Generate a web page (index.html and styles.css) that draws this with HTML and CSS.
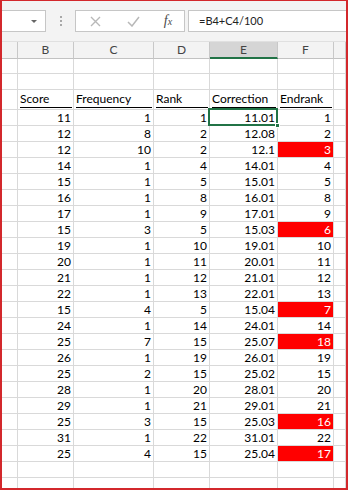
FILE: index.html
```html
<!DOCTYPE html>
<html lang="en">
<head>
    <meta charset="UTF-8">
    <meta name="viewport" content="width=device-width, initial-scale=1.0">
    <title>Endrank</title>
    <link rel="stylesheet" href="styles.css">
</head>
<body>
    <div id="window">
        <div id="toolbar">
            <div class="namebox"><span class="caret"></span></div>
            <div class="grip"><i></i><i></i><i></i></div>
            <div class="buttons">
                <span class="slot">
                    <svg width="11" height="11" viewBox="0 0 11 11"><path d="M1 1L10 10M10 1L1 10" stroke="#b8b8b8" stroke-width="1.4" fill="none"/></svg>
                </span>
                <span class="slot">
                    <svg width="13" height="11" viewBox="0 0 13 11"><path d="M1 6L5 10L12 1" stroke="#b8b8b8" stroke-width="1.5" fill="none"/></svg>
                </span>
                <span class="slot fx">f<sub>x</sub></span>
            </div>
            <div class="formula">=B4+C4/100</div>
        </div>

        <div id="sheet">
            <div class="row head">
                <div class="cell"></div>
                <div class="cell">B</div>
                <div class="cell">C</div>
                <div class="cell">D</div>
                <div class="cell current">E</div>
                <div class="cell">F</div>
                <div class="cell"></div>
            </div>
        </div>
    </div>

    <script>
        const titles = ['Score', 'Frequency', 'Rank', 'Correction', 'Endrank'];
        const data = [
            [11, 1, 1, '11.01', 1],
            [12, 8, 2, '12.08', 2],
            [12, 10, 2, '12.1', 3, true],
            [14, 1, 4, '14.01', 4],
            [15, 1, 5, '15.01', 5],
            [16, 1, 8, '16.01', 8],
            [17, 1, 9, '17.01', 9],
            [15, 3, 5, '15.03', 6, true],
            [19, 1, 10, '19.01', 10],
            [20, 1, 11, '20.01', 11],
            [21, 1, 12, '21.01', 12],
            [22, 1, 13, '22.01', 13],
            [15, 4, 5, '15.04', 7, true],
            [24, 1, 14, '24.01', 14],
            [25, 7, 15, '25.07', 18, true],
            [26, 1, 19, '26.01', 19],
            [25, 2, 15, '25.02', 15],
            [28, 1, 20, '28.01', 20],
            [29, 1, 21, '29.01', 21],
            [25, 3, 15, '25.03', 16, true],
            [31, 1, 22, '31.01', 22],
            [25, 4, 15, '25.04', 17, true]
        ];

        const sheet = document.getElementById('sheet');

        function addRow(values, rowClass) {
            const row = document.createElement('div');
            row.className = 'row' + (rowClass ? ' ' + rowClass : '');
            const cells = ['', ...values, ''];
            cells.forEach(function (value) {
                const cell = document.createElement('div');
                cell.className = 'cell';
                if (value !== '') {
                    const span = document.createElement('span');
                    span.innerText = value;
                    cell.appendChild(span);
                }
                row.appendChild(cell);
            });
            sheet.appendChild(row);
            return row;
        }

        addRow(['', '', '', '', ''], 'short');
        addRow(['', '', '', '', '']);
        addRow(titles, 'titles');

        data.forEach(function (item, i) {
            const row = addRow(item.slice(0, 5), 'num');
            if (item[5]) {
                row.children[5].classList.add('flag');
            }
            if (i === 0) {
                row.children[4].classList.add('active');
            }
        });

        addRow(['', '', '', '', '']);
        addRow(['', '', '', '', '']);
    </script>
</body>
</html>
```

FILE: styles.css
```css
body {
    margin: 0;
    font-family: 'Lato', sans-serif;
    background-color: #fff;
}

#window {
    width: 348px;
    height: 490px;
    box-sizing: border-box;
    border: 2px solid #d3282c;
    border-top-width: 1px;
    overflow: hidden;
}

#toolbar {
    height: 40px;
    display: flex;
    align-items: center;
    background-color: #f3f3f3;
}

.namebox {
    width: 43px;
    height: 20px;
    background-color: #fff;
    border: 1px solid #c6c6c6;
    border-left: none;
    position: relative;
}

.caret {
    position: absolute;
    right: 8px;
    top: 9px;
    border-left: 3px solid transparent;
    border-right: 3px solid transparent;
    border-top: 3px solid #666;
}

.grip {
    margin-left: 14px;
    display: flex;
    flex-direction: column;
    gap: 2px;
}

.grip i {
    width: 2px;
    height: 2px;
    background-color: #a8a8a8;
}

.buttons {
    margin-left: 13px;
    width: 108px;
    height: 20px;
    display: flex;
    background-color: #fff;
    border: 1px solid #c6c6c6;
}

.slot {
    width: 38px;
    display: flex;
    align-items: center;
    justify-content: center;
}

.slot.fx {
    width: 32px;
    font-family: 'Liberation Serif', serif;
    font-style: italic;
    font-size: 14px;
    color: #4a4a4a;
}

.slot.fx sub {
    font-size: 10px;
    vertical-align: -1px;
}

.formula {
    flex: 1;
    margin-left: 3px;
    height: 20px;
    line-height: 20px;
    padding-left: 10px;
    background-color: #fff;
    border: 1px solid #c6c6c6;
    border-right: none;
    font-size: 11px;
    color: #222;
}

.row {
    display: grid;
    grid-template-columns: 16px 56px 80px 56px 68px 56px 1fr;
    height: 16px;
}

.cell {
    box-sizing: border-box;
    border-right: 1px solid #d9d9d9;
    border-bottom: 1px solid #d9d9d9;
    font-size: 12px;
    color: #000;
    display: flex;
    align-items: flex-end;
    padding: 0 2px 0 2px;
    line-height: 14px;
    position: relative;
}

.row.head {
    height: 17px;
    background-color: #f3f3f3;
    border-top: 1px solid #e0e0e0;
}

.head .cell {
    border-right-color: #c8c8c8;
    border-bottom-color: #c2c2c2;
    justify-content: center;
    align-items: center;
    color: #444;
    font-size: 12px;
}

.head .cell.current {
    background-color: #d5d5d5;
    border-bottom: 2px solid #217346;
}

.row.short {
    height: 15px;
}

.row.titles {
    height: 20px;
}

.titles .cell {
    padding: 0 1px 1px 2px;
}

.titles .cell span {
    flex: 1;
    border-bottom: 1px solid #000;
    padding-bottom: 1px;
    line-height: 14px;
}

.titles .cell:first-child span,
.titles .cell:last-child span {
    border: none;
}

.num .cell {
    justify-content: flex-end;
}

.cell.flag {
    background-color: #ff0000;
    color: #fff;
}

.cell.active::after {
    content: '';
    position: absolute;
    left: -2px;
    top: -2px;
    right: -1px;
    bottom: -1px;
    border: 2px solid #217346;
}

.cell.active::before {
    content: '';
    position: absolute;
    right: -3px;
    bottom: -3px;
    width: 5px;
    height: 5px;
    background-color: #217346;
    border: 1px solid #fff;
    box-sizing: border-box;
    z-index: 2;
}
```
